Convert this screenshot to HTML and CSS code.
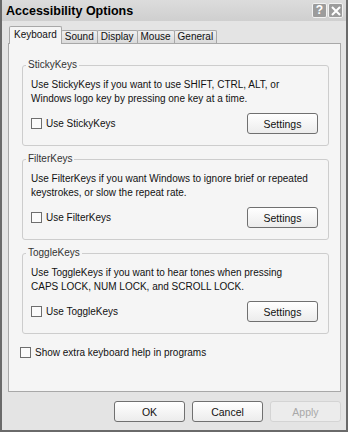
FILE: index.html
```html
<!DOCTYPE html>
<html lang="en">
<head>
    <meta charset="UTF-8">
    <meta name="viewport" content="width=device-width, initial-scale=1.0">
    <title>Accessibility Options</title>
    <link rel="stylesheet" href="styles.css">
</head>
<body>
    <div class="window">
        <div class="titlebar">
            <span class="title">Accessibility Options</span>
            <div class="caption-buttons">
                <span class="cap-btn help">?</span>
                <span class="cap-btn close">
                    <svg width="10" height="10" viewBox="0 0 10 10">
                        <path d="M1 1 L9 9 M9 1 L1 9" stroke="#fff" stroke-width="2" fill="none"/>
                    </svg>
                </span>
            </div>
        </div>

        <div class="content">
            <div class="tabs">
                <span class="tab active">Keyboard</span>
                <span class="tab">Sound</span>
                <span class="tab">Display</span>
                <span class="tab">Mouse</span>
                <span class="tab">General</span>
            </div>

            <div class="panel">
                <div class="group">
                    <div class="legend">StickyKeys</div>
                    <p>Use StickyKeys if you want to use SHIFT, CTRL, ALT, or<br>Windows logo key by pressing one key at a time.</p>
                    <div class="row">
                        <label class="check"><span class="box"></span>Use StickyKeys</label>
                        <button class="btn">Settings</button>
                    </div>
                </div>

                <div class="group">
                    <div class="legend">FilterKeys</div>
                    <p>Use FilterKeys if you want Windows to ignore brief or repeated<br>keystrokes, or slow the repeat rate.</p>
                    <div class="row">
                        <label class="check"><span class="box"></span>Use FilterKeys</label>
                        <button class="btn">Settings</button>
                    </div>
                </div>

                <div class="group">
                    <div class="legend">ToggleKeys</div>
                    <p>Use ToggleKeys if you want to hear tones when pressing<br>CAPS LOCK, NUM LOCK, and SCROLL LOCK.</p>
                    <div class="row">
                        <label class="check"><span class="box"></span>Use ToggleKeys</label>
                        <button class="btn">Settings</button>
                    </div>
                </div>

                <label class="check extra"><span class="box"></span>Show extra keyboard help in programs</label>
            </div>

            <div class="actions">
                <button class="btn">OK</button>
                <button class="btn">Cancel</button>
                <button class="btn disabled">Apply</button>
            </div>
        </div>
    </div>
</body>
</html>
```

FILE: styles.css
```css
body {
    margin: 0;
    background: #ffffff;
    font-family: "Liberation Sans", Arial, sans-serif;
    font-size: 10px;
    color: #111111;
}

.window {
    width: 348px;
    height: 432px;
    box-sizing: border-box;
    border: 2px solid #6a6a6a;
    border-top: none;
    background: #e4e4e4;
    display: flex;
    flex-direction: column;
}

.titlebar {
    height: 21px;
    background: linear-gradient(#dcdcdc, #cfcfcf);
    display: flex;
    align-items: center;
    justify-content: space-between;
    padding: 0 3px 0 4px;
}

.title {
    font-weight: bold;
    font-size: 12.5px;
    color: #000;
}

.caption-buttons {
    display: flex;
    gap: 1px;
}

.cap-btn {
    width: 13px;
    height: 13px;
    border: 1px solid #f2f2f2;
    border-radius: 2px;
    background: #9c9c9c;
    color: #fff;
    font-weight: bold;
    font-size: 12px;
    line-height: 13px;
    text-align: center;
    display: flex;
    align-items: center;
    justify-content: center;
}

.content {
    flex: 1;
    padding: 6px 5px 0 6px;
    display: flex;
    flex-direction: column;
}

.tabs {
    display: flex;
    align-items: flex-end;
    height: 16px;
    padding-left: 1px;
}

.tab {
    height: 12px;
    line-height: 12px;
    padding: 0 3px;
    border: 1px solid #a8a8a8;
    border-bottom: none;
    border-radius: 2px 2px 0 0;
    background: linear-gradient(#f0f0f0, #dadada);
    margin-right: -1px;
}

.tab.active {
    height: 17px;
    line-height: 16px;
    background: #f5f5f5;
    padding: 0 4px;
    position: relative;
    margin-bottom: -1px;
    z-index: 1;
}

.panel {
    height: 349px;
    box-sizing: border-box;
    border: 1px solid #a8a8a8;
    background: #f5f5f5;
    padding: 21px 11px 0 13px;
}

.group {
    height: 81px;
    box-sizing: border-box;
    border: 1px solid #cdcdcd;
    border-radius: 3px;
    padding: 0 10px 0 8px;
    margin-bottom: 13px;
}

.legend {
    width: fit-content;
    margin: -7px 0 0 -5px;
    padding: 0 2px;
    height: 12px;
    line-height: 12px;
    background: #f5f5f5;
    color: #333;
}

.group p {
    margin: 7px 0 0;
    line-height: 14px;
}

.row {
    margin-top: 7px;
    display: flex;
    align-items: center;
    justify-content: space-between;
}

.check {
    display: flex;
    align-items: center;
    gap: 4px;
}

.box {
    width: 9px;
    height: 9px;
    border: 1px solid #6e6e6e;
    background: #fbfbfb;
}

.extra {
    margin: 12px 0 0 -2px;
}

.btn {
    width: 71px;
    height: 21px;
    border: 1px solid #707070;
    border-radius: 3px;
    background: linear-gradient(#ffffff, #ececec);
    font-family: inherit;
    font-size: 10.5px;
    color: #111;
    padding: 0;
}

.actions {
    display: flex;
    justify-content: flex-end;
    gap: 7px;
    padding-top: 9px;
}

.btn.disabled {
    border-color: #d4d4d4;
    background: #ececec;
    color: #a8a8a8;
}
```
